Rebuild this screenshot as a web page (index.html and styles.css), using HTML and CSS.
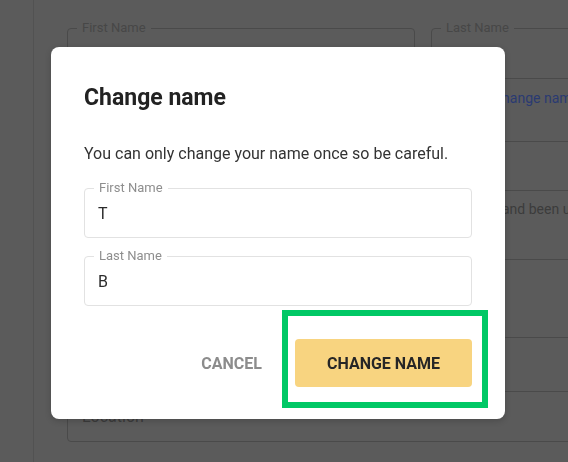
FILE: index.html
```html
<!DOCTYPE html>
<html lang="en">
<head>
<meta charset="utf-8">
<title>Change name</title>
<link rel="stylesheet" href="styles.css">
</head>
<body>
<div class="page">
  <aside class="sidebar"></aside>
  <main class="content">
    <div class="name-row">
      <div class="bg-field half"><span class="bg-label">First Name</span></div>
      <div class="bg-field half"><span class="bg-label">Last Name</span></div>
    </div>
    <div class="link-row"><a class="bg-link">Change name</a></div>
    <div class="bg-field wide"></div>
    <p class="bg-helper">and been used</p>
    <div class="bg-field wide tall"></div>
    <div class="bg-field wide loc">Location</div>
  </main>
</div>

<div class="backdrop">
  <div class="dialog" role="dialog" aria-labelledby="dlg-title">
    <h2 class="dialog-title" id="dlg-title">Change name</h2>
    <p class="dialog-text">You can only change your name once so be careful.</p>
    <div class="input">
      <span class="input-label">First Name</span>
      <span class="input-value">T</span>
    </div>
    <div class="input second">
      <span class="input-label">Last Name</span>
      <span class="input-value">B</span>
    </div>
    <div class="actions">
      <button class="btn-cancel" type="button">Cancel</button>
      <button class="btn-primary" type="button">Change name</button>
    </div>
  </div>
</div>
</body>
</html>
```

FILE: styles.css
```css
* { box-sizing: border-box; }

html, body {
  margin: 0;
  padding: 0;
  width: 568px;
  height: 462px;
  overflow: hidden;
  background: #5b5b5b;
  font-family: Roboto, "Liberation Sans", Arial, sans-serif;
}

/* ---------- dimmed page behind the dialog ---------- */
.page {
  display: flex;
  height: 462px;
}

.sidebar {
  flex: 0 0 34px;
  border-right: 1px solid #525252;
}

.content {
  flex: 0 0 auto;
  width: 800px;
  padding: 28px 0 0 33px;
}

.name-row {
  display: flex;
  gap: 16px;
}

.bg-field {
  position: relative;
  height: 51px;
  border: 1px solid #4a4a4a;
  border-radius: 4px;
}

.bg-field.half { width: 348px; }
.bg-field.wide { width: 712px; height: 50px; }
.bg-field.tall { height: 79px; }
.bg-field.loc {
  height: 51px;
  margin-top: 53px;
  display: flex;
  align-items: center;
  padding-left: 14px;
  font-size: 16px;
  color: #3c3c3c;
}

.bg-label {
  position: absolute;
  top: -9px;
  left: 9px;
  padding: 0 5px;
  background: #5b5b5b;
  font-size: 13px;
  line-height: 16px;
  color: #474747;
}

.link-row {
  height: 62px;
  padding: 10px 0 0 426px;
  font-size: 14px;
  line-height: 18px;
}

.bg-link {
  color: #2a3a72;
}

.bg-helper {
  margin: 0;
  height: 68px;
  padding: 9px 0 0 435px;
  font-size: 14px;
  line-height: 18px;
  color: #3c3c3c;
  white-space: nowrap;
}

/* ---------- dialog ---------- */
.backdrop {
  position: fixed;
  inset: 0;
  display: flex;
  align-items: flex-start;
  justify-content: flex-start;
  padding: 47px 0 0 51px;
}

.dialog {
  width: 454px;
  background: #ffffff;
  border-radius: 8px;
  padding: 39px 33px 32px;
  box-shadow: 0 2px 6px rgba(0, 0, 0, 0.18);
}

.dialog-title {
  margin: 0;
  font-size: 23px;
  line-height: 24px;
  font-weight: 700;
  color: #222222;
}

.dialog-text {
  margin: 32px 0 0;
  font-size: 16px;
  line-height: 24px;
  color: #333333;
}

.input {
  position: relative;
  margin-top: 22px;
  height: 50px;
  border: 1px solid #e2e2e2;
  border-radius: 4px;
  padding: 0 13px;
  display: flex;
  align-items: center;
}

.input.second { margin-top: 18px; }

.input-label {
  position: absolute;
  top: -9px;
  left: 9px;
  padding: 0 5px;
  background: #ffffff;
  font-size: 13px;
  line-height: 16px;
  color: #8e8e8e;
}

.input-value {
  font-size: 16px;
  color: #2b2b2b;
}

.actions {
  margin-top: 33px;
  display: flex;
  justify-content: flex-end;
  align-items: center;
  gap: 33px;
}

.btn-cancel,
.btn-primary {
  font-family: Roboto, "Liberation Sans", Arial, sans-serif;
  font-size: 16px;
  font-weight: 700;
  text-transform: uppercase;
  border: 0;
  cursor: pointer;
}

.btn-cancel {
  background: transparent;
  padding: 0;
  color: #8c8c8c;
}

.btn-primary {
  position: relative;
  width: 177px;
  height: 48px;
  border-radius: 4px;
  background: #f8d480;
  color: #262626;
}

/* highlight annotation drawn over the primary action */
.btn-primary::after {
  content: "";
  position: absolute;
  top: -29px;
  right: -16px;
  bottom: -21px;
  left: -13px;
  border: 6px solid #00c865;
  pointer-events: none;
}
```
